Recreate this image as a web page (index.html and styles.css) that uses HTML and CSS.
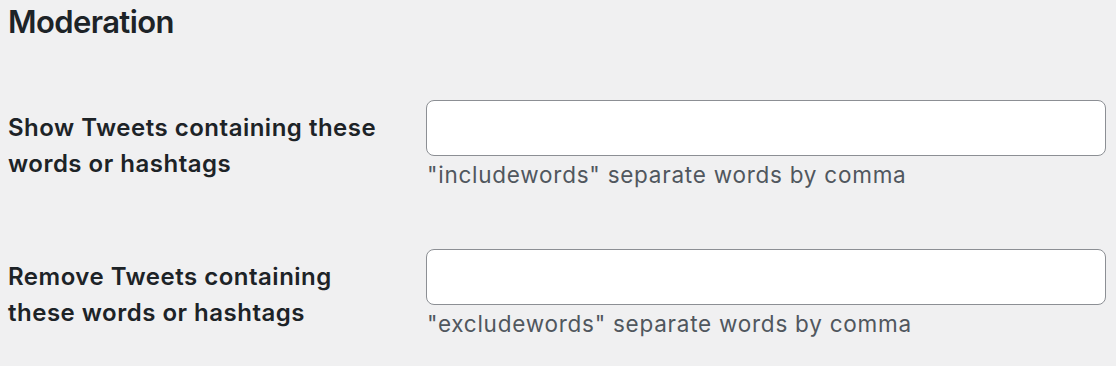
FILE: index.html
```html
<!DOCTYPE html>
<html lang="en">
<head>
<meta charset="utf-8">
<title>Moderation</title>
<link rel="stylesheet" href="styles.css">
</head>
<body>
<h2 class="section-title">Moderation</h2>
<div class="form-table">
  <div class="form-row">
    <label class="form-label" for="includewords">Show Tweets containing these words or hashtags</label>
    <div class="form-field">
      <input class="text-input" type="text" id="includewords">
      <p class="description">"includewords" separate words by comma</p>
    </div>
  </div>
  <div class="form-row">
    <label class="form-label" for="excludewords">Remove Tweets containing these words or hashtags</label>
    <div class="form-field">
      <input class="text-input" type="text" id="excludewords">
      <p class="description">"excludewords" separate words by comma</p>
    </div>
  </div>
</div>
</body>
</html>
```
FILE: styles.css
```css
html, body {
  margin: 0;
  padding: 0;
  background: #f0f0f1;
}
body {
  padding: 0 10px 0 8px;
  font-family: Inter, "Liberation Sans", sans-serif;
  color: #1d2327;
}
.section-title {
  margin: 3px 0 0;
  font-size: 31px;
  line-height: 38px;
  font-weight: 600;
  letter-spacing: -0.6px;
  color: #1d2327;
}
.form-table {
  display: flex;
  flex-direction: column;
  gap: 58px;
  margin-top: 59px;
}
.form-row {
  display: flex;
  align-items: flex-start;
}
.form-label {
  box-sizing: border-box;
  width: 418px;
  flex: none;
  padding: 10px 36px 0 0;
  font-size: 24px;
  line-height: 36px;
  font-weight: 600;
  letter-spacing: 0.5px;
  color: #1d2327;
}
.form-field {
  flex: 1;
  display: flex;
  flex-direction: column;
}
.text-input {
  box-sizing: border-box;
  width: 100%;
  height: 56px;
  margin: 0;
  border: 1px solid #8c8f94;
  border-radius: 8px;
  background: #fff;
  font: inherit;
}
.description {
  margin: 3px 0 0 1px;
  font-size: 22.5px;
  line-height: 32px;
  letter-spacing: 0.75px;
  color: #50575e;
}
```
